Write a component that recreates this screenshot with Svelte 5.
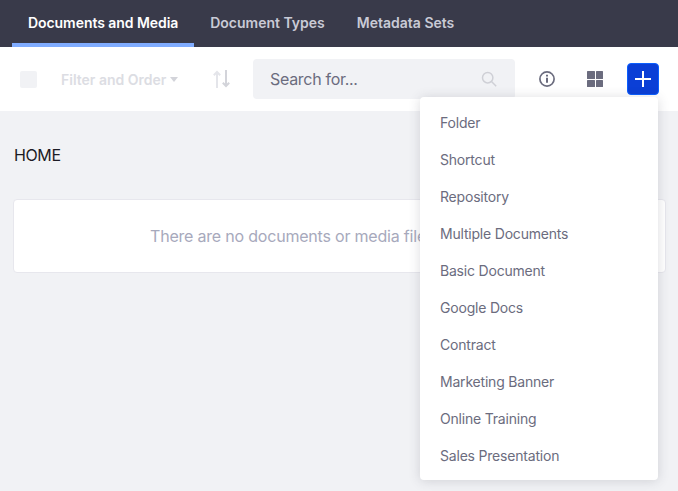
<script>
  const tabs = [
    { label: "Documents and Media", active: true },
    { label: "Document Types" },
    { label: "Metadata Sets" }
  ];
  const menuItems = [
    "Folder",
    "Shortcut",
    "Repository",
    "Multiple Documents",
    "Basic Document",
    "Google Docs",
    "Contract",
    "Marketing Banner",
    "Online Training",
    "Sales Presentation"
  ];
</script>

<div class="page">
  <nav class="tabs">
    {#each tabs as tab (tab.label)}
      <a class="tab" class:active={tab.active} href="#top">{tab.label}</a>
    {/each}
  </nav>

  <div class="toolbar">
    <span class="check"></span>
    <span class="filter">Filter and Order<span class="caret"></span></span>
    <svg class="sort" width="17" height="18" viewBox="0 0 17 18" fill="none" stroke-width="2">
      <path d="M4 18V2M.8 5.200 4 2l3.200 3.200" stroke="#e4e5ea" />
      <path d="M13 0v16M9.800 12.800 13 16l3.200-3.200" stroke="#d3d4da" />
    </svg>
    <div class="search">
      <span>Search for...</span>
      <svg width="16" height="16" viewBox="0 0 16 16" fill="none" stroke="#cfd0d6" stroke-width="1.500">
        <circle cx="6.700" cy="6.700" r="5.200" />
        <path d="m10.500 10.500 4.700 4.700" />
      </svg>
    </div>
    <div class="actions">
      <svg width="16" height="16" viewBox="0 0 16 16" fill="none" stroke="#6b6c7e">
        <circle cx="8" cy="8" r="7.100" stroke-width="1.700" />
        <path d="M8 6.800v5" stroke-width="2" />
        <path d="M8 3.700v1.800" stroke-width="2" />
      </svg>
      <div class="cards">
        <span></span><span></span><span></span><span></span>
      </div>
      <button class="add" aria-label="Add">
        <svg width="16" height="16" viewBox="0 0 16 16" stroke="#fff" stroke-width="2">
          <path d="M8 0v16M0 8h16" />
        </svg>
      </button>
    </div>
  </div>

  <main class="content">
    <div class="crumb">HOME</div>
    <div class="empty">There are no documents or media files</div>
  </main>

  <ul class="menu">
    {#each menuItems as item (item)}
      <li>{item}</li>
    {/each}
  </ul>
</div>

<style>
  :global(body) {
    margin: 0;
    background: #f1f2f5;
    font-family: Inter, "Noto Sans", sans-serif;
  }

  .page {
    position: relative;
    width: 678px;
    height: 491px;
    overflow: hidden;
    background: #f1f2f5;
  }

  .tabs {
    display: flex;
    height: 47px;
    padding-left: 12px;
    background: #393a4a;
    box-sizing: border-box;
  }

  .tab {
    display: flex;
    align-items: center;
    height: 47px;
    box-sizing: border-box;
    padding: 3px 16px 1px;
    border-bottom: 4px solid transparent;
    font-size: 14px;
    font-weight: 600;
    color: #c9cad6;
    text-decoration: none;
  }

  .tab.active {
    color: #fff;
    letter-spacing: -0.06px;
    border-bottom-color: #80acff;
  }

  .toolbar {
    display: flex;
    align-items: center;
    height: 64px;
    background: #fff;
    box-sizing: border-box;
    padding-left: 20px;
  }

  .check {
    width: 17px;
    height: 17px;
    border-radius: 2px;
    background: #f1f2f5;
    flex: none;
  }

  .filter {
    display: flex;
    align-items: center;
    width: 118px;
    margin-left: 24px;
    font-size: 14px;
    font-weight: 600;
    color: #dcdde3;
    white-space: nowrap;
  }

  .caret {
    margin-left: 4px;
    border-left: 4.500px solid transparent;
    border-right: 4.500px solid transparent;
    border-top: 5px solid #d3d4da;
  }

  .sort {
    margin-left: 34px;
    flex: none;
  }

  .search {
    display: flex;
    align-items: center;
    justify-content: space-between;
    width: 262px;
    height: 40px;
    margin: 0 0 1px 23px;
    padding: 0 18px 0 17px;
    box-sizing: border-box;
    border-radius: 4px;
    background: #f1f2f5;
    font-size: 16px;
    letter-spacing: -0.3px;
    color: #6b6c7e;
  }

  .actions {
    display: flex;
    align-items: center;
    margin-left: 24px;
    gap: 32px;
  }

  .cards {
    display: grid;
    grid-template-columns: 7.500px 7.500px;
    grid-auto-rows: 7.500px;
    gap: 1px;
  }

  .cards span {
    background: #6b6c7e;
    border-radius: 0.5px;
  }

  .add {
    display: flex;
    align-items: center;
    justify-content: center;
    width: 32px;
    height: 32px;
    margin: 0 0 1px -8px;
    padding: 0;
    border: 1px solid #0b5fff;
    border-radius: 4px;
    background: #0b3fd6;
  }

  .content {
    padding: 34px 12px 0 13px;
  }

  .crumb {
    padding-left: 1px;
    font-size: 16px;
    line-height: 20px;
    letter-spacing: -0.4px;
    color: #1c1c24;
  }

  .empty {
    margin-top: 34px;
    height: 74px;
    display: flex;
    align-items: center;
    padding-left: 136px;
    border: 1px solid #e7e7ed;
    border-radius: 4px;
    background: #fff;
    box-sizing: border-box;
    font-size: 16px;
    letter-spacing: -0.2px;
    color: #a7a9bc;
    white-space: nowrap;
  }

  .menu {
    position: absolute;
    left: 420px;
    top: 97px;
    width: 238px;
    margin: 0;
    padding: 7px 0 6px;
    box-sizing: border-box;
    list-style: none;
    border-radius: 4px;
    background: #fff;
    box-shadow: 0 1px 12px rgba(57, 58, 74, 0.18);
  }

  .menu li {
    height: 37px;
    padding-left: 20px;
    font-size: 14px;
    line-height: 37px;
    letter-spacing: -0.2px;
    color: #6b6c7e;
  }
</style>
